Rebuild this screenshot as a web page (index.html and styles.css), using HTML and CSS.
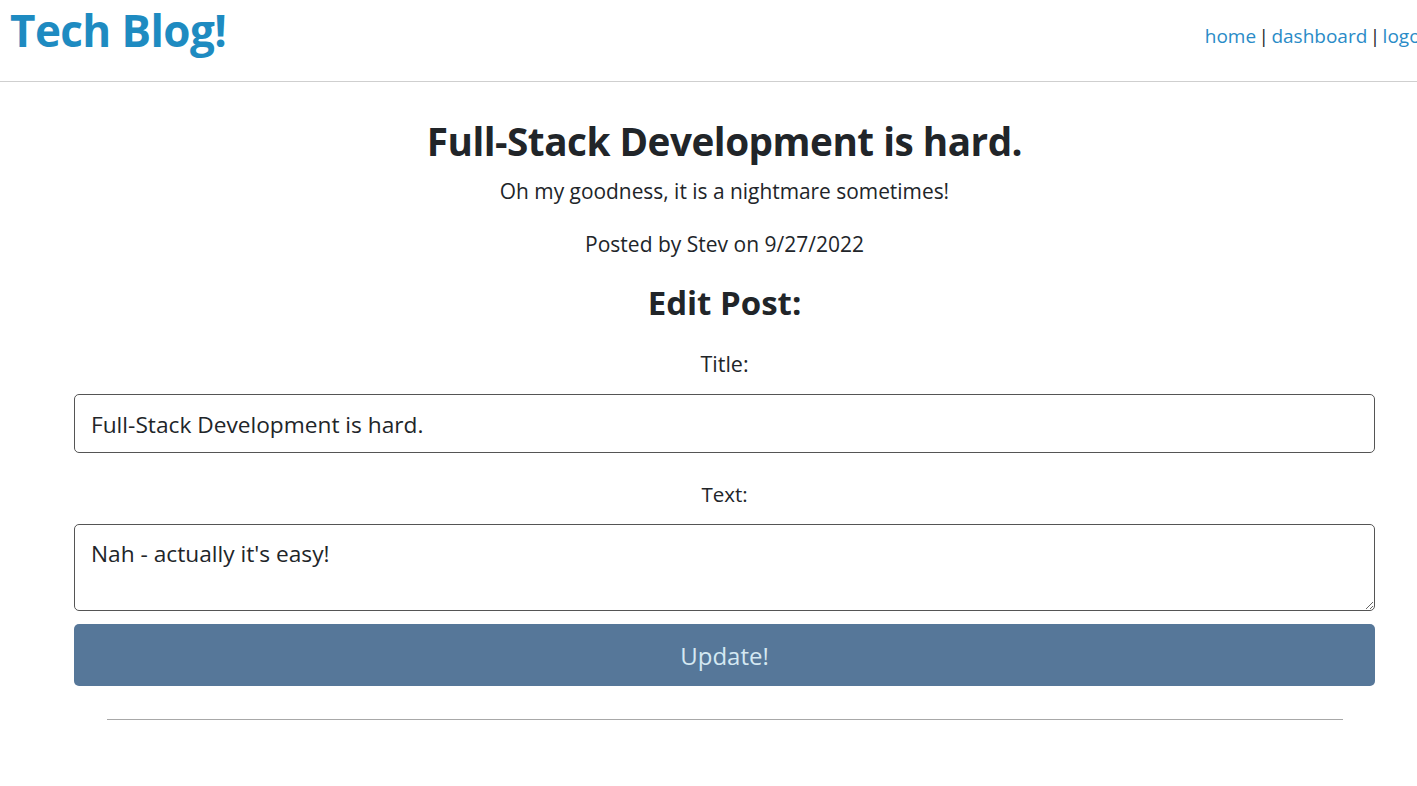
FILE: index.html
```html
<!DOCTYPE html>
<html lang="en">
<head>
<meta charset="utf-8">
<title>Tech Blog!</title>
<link rel="stylesheet" href="styles.css">
</head>
<body>
<div class="page">
  <header class="site-header">
    <h1 class="brand">Tech Blog!</h1>
    <nav class="nav">
      <a href="#">home</a> | <a href="#">dashboard</a> | <a href="#">logout</a>
    </nav>
  </header>
  <main class="main">
    <h1 class="post-title">Full-Stack Development is hard.</h1>
    <p class="post-body">Oh my goodness, it is a nightmare sometimes!</p>
    <p class="post-meta">Posted by Stev on 9/27/2022</p>
    <h2 class="edit-heading">Edit Post:</h2>
    <form class="edit-form">
      <label class="field-label" for="title">Title:</label>
      <input class="field-input" id="title" type="text" value="Full-Stack Development is hard.">
      <label class="field-label label-text" for="text">Text:</label>
      <textarea class="field-area" id="text">Nah - actually it's easy!</textarea>
      <button class="update-btn" type="button">Update!</button>
    </form>
    <hr class="divider">
  </main>
</div>
</body>
</html>
```

FILE: styles.css
```css
html, body {
  margin: 0;
  padding: 0;
  overflow-x: hidden;
  background: #fff;
}
body {
  font-family: "Open Sans", "Noto Sans", sans-serif;
  color: #212529;
  font-size: 20px;
  line-height: 1.5;
}
.page {
  width: calc(100% + 32px);
}
.site-header {
  display: flex;
  justify-content: space-between;
  align-items: flex-start;
  height: 81px;
  border-bottom: 1px solid #cfcfcf;
  padding: 0 10px;
  box-sizing: content-box;
}
.brand {
  margin: 4px 0 0;
  font-size: 44px;
  font-weight: 700;
  line-height: 1.2;
  color: #1e8bc1;
  letter-spacing: -0.6px;
}
.nav {
  margin-top: 22px;
  margin-right: 0;
  font-size: 19px;
  word-spacing: -2.5px;
  color: #212529;
  white-space: nowrap;
}
.nav a {
  color: #2a8bc7;
  text-decoration: none;
}
.main {
  width: 1301px;
  margin: 0 auto;
  display: flex;
  flex-direction: column;
  align-items: center;
  text-align: center;
}
.post-title {
  margin: 35px 0 0;
  font-size: 38.7px;
  font-weight: 700;
  line-height: 48px;
  letter-spacing: -0.5px;
}
.post-body {
  margin: 11px 0 0;
  font-size: 20.9px;
  line-height: 30px;
}
.post-meta {
  margin: 23px 0 0;
  font-size: 21px;
  line-height: 30px;
}
.edit-heading {
  margin: 25px 0 0;
  font-size: 33px;
  font-weight: 700;
  line-height: 38px;
}
.edit-form {
  width: 100%;
  display: flex;
  flex-direction: column;
  align-items: center;
}
.field-label {
  margin-top: 27px;
  font-size: 21.5px;
  line-height: 30px;
}
.field-input,
.field-area {
  width: 100%;
  box-sizing: border-box;
  margin-top: 15px;
  border: 1px solid #555;
  border-radius: 5px;
  font-family: inherit;
  font-size: 22.7px;
  color: #212529;
  padding: 0 16px;
  background: #fff;
}
.field-input {
  height: 59px;
  padding-top: 2px;
}
.label-text {
  margin-top: 26px;
  font-size: 20.5px;
}
.field-area {
  height: 87px;
  padding-top: 14px;
  line-height: 30px;
  resize: vertical;
}
.update-btn {
  width: 100%;
  height: 62px;
  margin-top: 13px;
  border: none;
  border-radius: 5px;
  background: #567799;
  color: #d4e8f2;
  font-family: inherit;
  font-size: 24px;
}
.divider {
  width: 1236px;
  margin: 33px 0 0;
  border: none;
  border-top: 1px solid #a8a8a8;
}
```
